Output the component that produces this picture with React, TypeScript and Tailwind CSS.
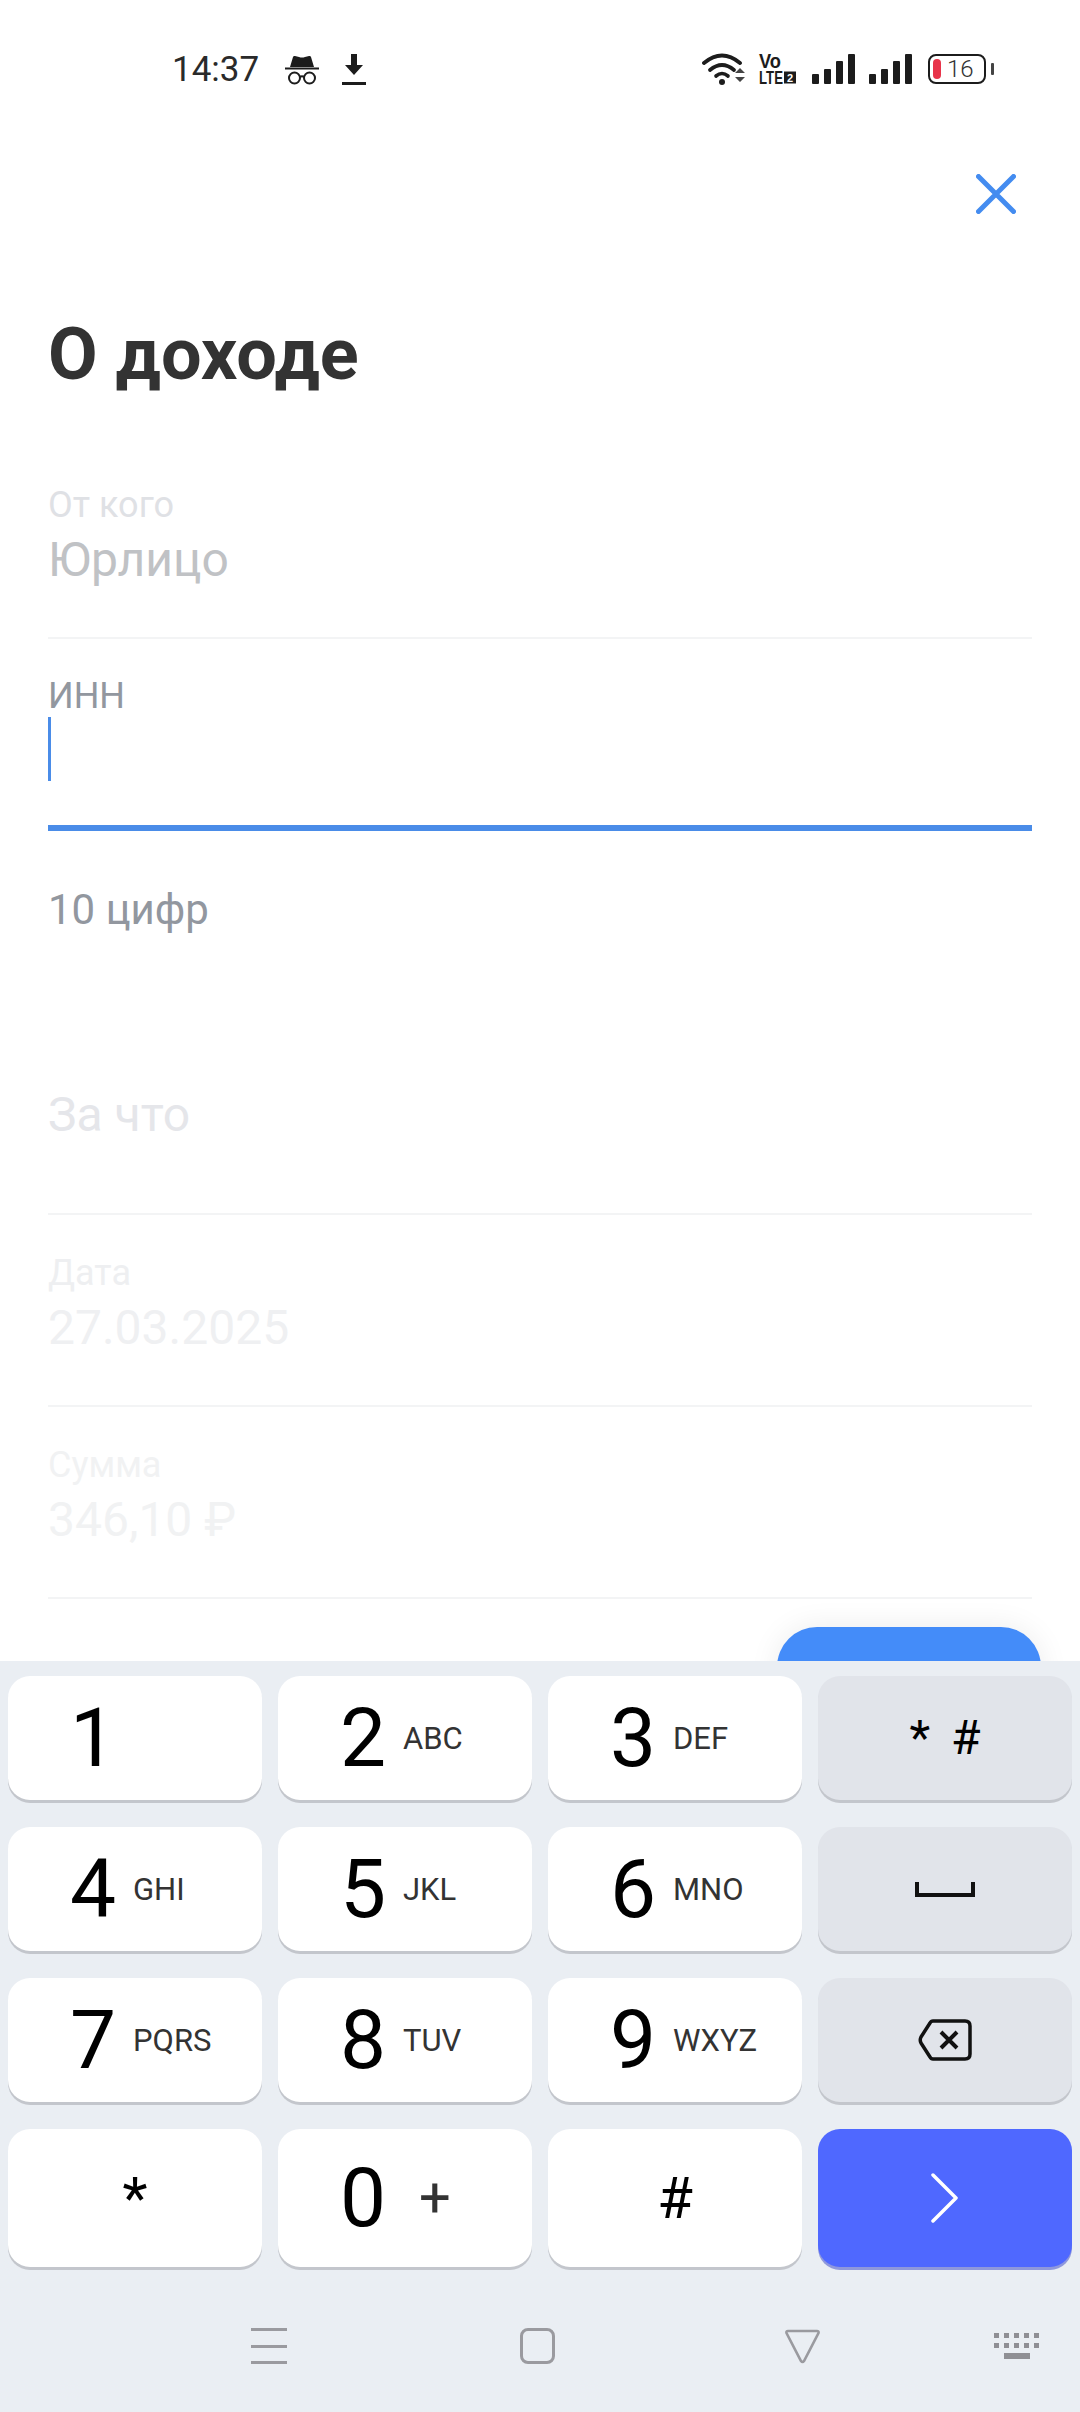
import React from 'react';

const ROBOTO = 'font-[Roboto,"Noto_Sans",sans-serif]';

interface KeyDef {
  digit: string;
  letters?: string;
}

const digitRows: KeyDef[][] = [
  [{ digit: '1' }, { digit: '2', letters: 'ABC' }, { digit: '3', letters: 'DEF' }],
  [{ digit: '4', letters: 'GHI' }, { digit: '5', letters: 'JKL' }, { digit: '6', letters: 'MNO' }],
  [{ digit: '7', letters: 'PQRS' }, { digit: '8', letters: 'TUV' }, { digit: '9', letters: 'WXYZ' }],
];

const StatusBar = () => (
  <div className="flex h-[138px] items-center pl-[172px] text-[#1c1c1c]">
    <span className="w-[87px] text-[35px] leading-none text-[#2a2a2a]">14:37</span>
    {/* incognito */}
    <svg className="ml-[26px]" width="34" height="31" viewBox="0 0 34 31" fill="none">
      <path d="M5 13 L8 3 Q8.5 1.5 10 2 L14 3 Q17 4 20 3 L24 2 Q25.5 1.5 26 3 L29 13 Z" fill="#1c1c1c" />
      <path d="M0 14.5 H34" stroke="#1c1c1c" strokeWidth="2" />
      <circle cx="9.5" cy="24" r="5.5" stroke="#1c1c1c" strokeWidth="2" />
      <circle cx="24.5" cy="24" r="5.5" stroke="#1c1c1c" strokeWidth="2" />
      <path d="M15 23 Q17 21.5 19 23" stroke="#1c1c1c" strokeWidth="2" />
    </svg>
    {/* download */}
    <svg className="ml-[23px]" width="24" height="31" viewBox="0 0 24 31" fill="#1c1c1c">
      <path d="M9 0 H15 V11 H21 L12 21 L3 11 H9 Z" />
      <rect x="0" y="28" width="24" height="3" />
    </svg>

    {/* wifi */}
    <svg className="ml-[336px]" width="44" height="32" viewBox="0 0 44 32" fill="none">
      <path d="M2 10 Q20 -5 38 10" stroke="#1c1c1c" strokeWidth="3.8" strokeLinecap="round" />
      <path d="M8 17 Q20 7 32 17" stroke="#1c1c1c" strokeWidth="3.8" strokeLinecap="round" />
      <path d="M14 23 Q20 18 26 23" stroke="#1c1c1c" strokeWidth="3.6" strokeLinecap="round" />
      <circle cx="20" cy="29" r="3" fill="#1c1c1c" />
      <path d="M33 20 L38 15 L43 20 Z M33 24 H43 L38 29 Z" fill="#444" />
    </svg>
    {/* VoLTE 2 */}
    <svg
      className="ml-[13px] overflow-visible font-['Liberation_Sans',sans-serif] font-bold"
      width="38"
      height="30"
      viewBox="0 0 38 30"
      fill="#1c1c1c"
    >
      <text x="0" y="14" fontSize="20" textLength="22" lengthAdjust="spacingAndGlyphs">Vo</text>
      <text x="0" y="29.5" fontSize="18" textLength="24" lengthAdjust="spacingAndGlyphs">LTE</text>
      <rect x="25" y="17.5" width="12" height="12" />
      <text x="28" y="27.5" fontSize="11" fill="#fff">2</text>
    </svg>
    <SignalBars className="ml-[15px]" />
    <SignalBars className="ml-[14px]" />
    {/* battery */}
    <div className="ml-[16px] flex items-center">
      <div className="flex h-[30px] w-[58px] items-center rounded-[8px] border-[2px] border-[#1c1c1c] pl-[3px]">
        <div className="h-[20px] w-[8px] rounded-[4px] bg-[#e8344a]" />
        <span className="ml-[6px] text-[24px] font-light leading-none text-[#333]">16</span>
      </div>
      <div className="ml-[5px] h-[12px] w-[3px] rounded-[1px] bg-[#444]" />
    </div>
  </div>
);

const SignalBars = ({ className }: { className: string }) => (
  <div className={`flex h-[30px] items-end gap-[5px] ${className}`}>
    <div className="h-[10px] w-[7px] rounded-[1px] bg-[#1c1c1c]" />
    <div className="h-[15px] w-[7px] rounded-[1px] bg-[#1c1c1c]" />
    <div className="h-[23px] w-[7px] rounded-[1px] bg-[#1c1c1c]" />
    <div className="h-[30px] w-[7px] rounded-[1px] bg-[#1c1c1c]" />
  </div>
);

const Field = ({
  label,
  value,
  labelClass,
  valueClass,
}: {
  label: string;
  value: string;
  labelClass: string;
  valueClass: string;
}) => (
  <div className="h-[192px] border-b-2 border-[#f3f4f5] pt-[38px]">
    <div className={`text-[36px] leading-[40px] ${labelClass}`}>{label}</div>
    <div className={`mt-[10px] text-[48px] leading-[50px] ${valueClass}`}>{value}</div>
  </div>
);

const DigitKey = ({ digit, letters }: KeyDef) => (
  <div className="flex h-[124px] items-center rounded-[22px] bg-white pl-[62px] shadow-[0_3px_0_#c3c6cc]">
    <span className="w-[46px] text-[82px] leading-none text-black">{digit}</span>
    {letters && <span className="ml-[17px] text-[31px] leading-none text-[#333]">{letters}</span>}
  </div>
);

const SideKey = ({ children }: { children: React.ReactNode }) => (
  <div className="flex h-[124px] items-center justify-center rounded-[22px] bg-[#e1e4ea] shadow-[0_3px_0_#c3c6cc]">
    {children}
  </div>
);

export default function App() {
  return (
    <div className={`flex h-[2412px] w-[1080px] flex-col overflow-hidden bg-white ${ROBOTO}`}>
      <div className="relative h-[1661px] shrink-0 overflow-hidden">
        <StatusBar />

        <div className="flex justify-end pr-[64px] pt-[36px]">
          <svg width="40" height="40" viewBox="0 0 40 40" fill="none">
            <path d="M2.5 2.5 L37.5 37.5 M37.5 2.5 L2.5 37.5" stroke="#448cf0" strokeWidth="5" strokeLinecap="round" />
          </svg>
        </div>

        <h1 className="mt-[101px] pl-[48px] text-[72px] font-bold leading-[80px] text-[#333]">О доходе</h1>

        <div className="mt-[52px] px-[48px]">
          <Field label="От кого" value="Юрлицо" labelClass="text-[#dfe1e5]" valueClass="text-[#c0c2c5]" />

          <div className="h-[192px] border-b-[6px] border-[#4a8ce8] pt-[37px]">
            <div className="text-[36px] leading-[40px] text-[#92979f]">ИНН</div>
            <div className="mt-[1px] h-[64px] w-[3px] bg-[#4a8ce8]" />
          </div>

          <div className="h-[130px] pt-[54px] text-[42px] leading-[50px] text-[#92979f]">10 цифр</div>

          <div className="flex h-[254px] items-start border-b-2 border-[#f3f4f5] pt-[129px] text-[48px] leading-[50px] text-[#e5e6ea]">
            За что
          </div>

          <Field label="Дата" value="27.03.2025" labelClass="text-[#eeeff1]" valueClass="text-[#eff0f2]" />
          <Field label="Сумма" value="346,10 ₽" labelClass="text-[#f1f2f3]" valueClass="text-[#f1f2f3]" />
        </div>

        <div className="absolute left-[777px] top-[1627px] h-[100px] w-[264px] rounded-[40px] bg-[#448cf9] shadow-[0_0_30px_rgba(0,0,0,0.08)]" />
      </div>

      {/* keyboard */}
      <div className="flex flex-1 flex-col bg-[#eaeef3] px-[8px] pt-[15px]">
        <div className="grid grid-cols-4 gap-x-[16px] gap-y-[27px]">
          {digitRows[0].map((k) => (
            <DigitKey key={k.digit} {...k} />
          ))}
          <SideKey>
            <span className="text-[48px] leading-none text-black">*</span>
            <span className="ml-[21px] text-[48px] leading-none text-black">#</span>
          </SideKey>

          {digitRows[1].map((k) => (
            <DigitKey key={k.digit} {...k} />
          ))}
          <SideKey>
            <svg width="60" height="15" viewBox="0 0 60 15" fill="none">
              <path d="M2 0 V13 H58 V0" stroke="#111" strokeWidth="4" />
            </svg>
          </SideKey>

          {digitRows[2].map((k) => (
            <DigitKey key={k.digit} {...k} />
          ))}
          <SideKey>
            <svg width="54" height="42" viewBox="0 0 54 42" fill="none">
              <path
                d="M15 2 H47 Q52 2 52 7 V35 Q52 40 47 40 H15 Q13 40 12 38 L3 24 Q1.5 21 3 18 L12 4 Q13 2 15 2 Z"
                stroke="#111"
                strokeWidth="3.5"
                strokeLinejoin="round"
              />
              <path d="M23 13 L39 29 M39 13 L23 29" stroke="#111" strokeWidth="4" />
            </svg>
          </SideKey>
        </div>

        {/* bottom row is taller */}
        <div className="mt-[27px] grid grid-cols-4 gap-x-[16px]">
          <div className="flex h-[138px] items-center justify-center rounded-[22px] bg-white shadow-[0_3px_0_#c3c6cc]">
            <span className="text-[58px] leading-none text-black">*</span>
          </div>
          <div className="flex h-[138px] items-center rounded-[22px] bg-white pl-[62px] shadow-[0_3px_0_#c3c6cc]">
            <span className="w-[46px] text-[82px] leading-none text-black">0</span>
            <span className="ml-[33px] text-[56px] leading-none text-[#333]">+</span>
          </div>
          <div className="flex h-[138px] items-center justify-center rounded-[22px] bg-white shadow-[0_3px_0_#c3c6cc]">
            <span className="text-[58px] leading-none text-black">#</span>
          </div>
          <div className="flex h-[138px] items-center justify-center rounded-[22px] bg-[#4f68ff] shadow-[0_3px_0_#8f98dc]">
            <svg width="28" height="50" viewBox="0 0 28 50" fill="none">
              <path d="M2 2 L25 25 L2 48" stroke="#fff" strokeWidth="3.5" strokeLinecap="round" strokeLinejoin="round" />
            </svg>
          </div>
        </div>

        {/* nav bar */}
        <div className="mt-[61px] flex h-[36px] items-center pl-[243px]">
          <div className="flex h-[36px] w-[36px] flex-col justify-between">
            <div className="h-[3px] bg-[#9a9a9f]" />
            <div className="h-[3px] bg-[#9a9a9f]" />
            <div className="h-[3px] bg-[#9a9a9f]" />
          </div>
          <div className="ml-[233px] h-[36px] w-[35px] rounded-[8px] border-[3px] border-[#9a9a9f]" />
          <svg className="ml-[230px]" width="35" height="35" viewBox="0 0 35 35" fill="none">
            <path d="M3 2 H32 Q34 2 33.5 4 L19 32 Q17.5 34 16 32 L1.5 4 Q1 2 3 2 Z" stroke="#9a9a9f" strokeWidth="2.6" />
          </svg>
          <svg className="ml-[174px]" width="46" height="26" viewBox="0 0 46 26" fill="#8f8f94">
            {[0, 10, 20, 30, 40].map((x) => (
              <React.Fragment key={x}>
                <rect x={x} y="0" width="5" height="5" />
                <rect x={x} y="10" width="5" height="5" />
              </React.Fragment>
            ))}
            <rect x="10" y="20" width="26" height="6" />
          </svg>
        </div>
      </div>
    </div>
  );
}
